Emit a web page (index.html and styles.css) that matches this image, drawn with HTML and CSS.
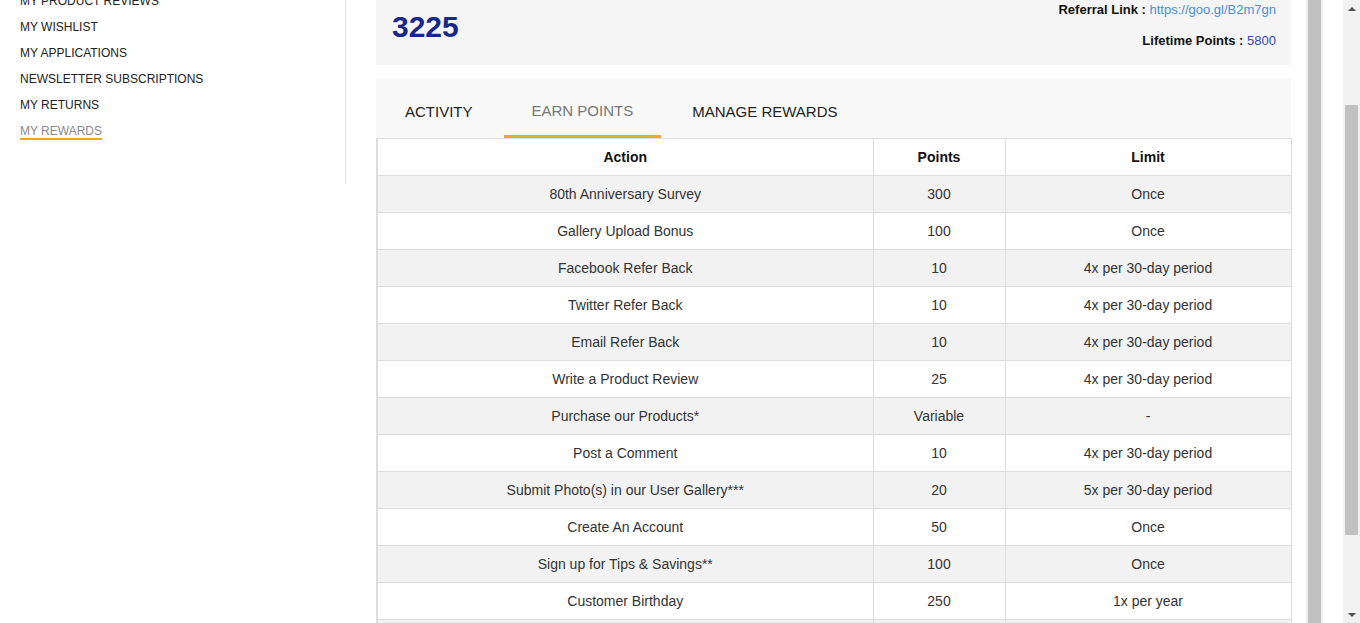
FILE: index.html
```html
<!DOCTYPE html>
<html lang="en">
<head>
<meta charset="utf-8">
<title>My Rewards</title>
<link rel="stylesheet" href="styles.css">
</head>
<body>
<div class="viewport">
  <div class="page">
    <aside class="sidebar">
      <ul class="side-menu">
        <li><a href="#">MY PRODUCT REVIEWS</a></li>
        <li><a href="#">MY WISHLIST</a></li>
        <li><a href="#">MY APPLICATIONS</a></li>
        <li><a href="#">NEWSLETTER SUBSCRIPTIONS</a></li>
        <li><a href="#">MY RETURNS</a></li>
        <li><a href="#" class="current">MY REWARDS</a></li>
      </ul>
    </aside>
    <main class="main">
      <section class="summary">
        <div class="balance">3225</div>
        <div class="meta">
          <p class="meta-line"><b>Referral Link :</b> <a href="#" class="ref-link">https://goo.gl/B2m7gn</a></p>
          <p class="meta-line meta-second"><b>Lifetime Points :</b> <span class="lifetime">5800</span></p>
        </div>
      </section>
      <section class="rewards">
        <nav class="tabs">
          <a href="#" class="tab">ACTIVITY</a>
          <a href="#" class="tab active">EARN POINTS</a>
          <a href="#" class="tab">MANAGE REWARDS</a>
        </nav>
        <table class="earn-table">
          <colgroup>
            <col class="c-action">
            <col class="c-points">
            <col class="c-limit">
          </colgroup>
          <thead>
            <tr><th>Action</th><th>Points</th><th>Limit</th></tr>
          </thead>
          <tbody>
            <tr><td>80th Anniversary Survey</td><td>300</td><td>Once</td></tr>
            <tr><td>Gallery Upload Bonus</td><td>100</td><td>Once</td></tr>
            <tr><td>Facebook Refer Back</td><td>10</td><td>4x per 30-day period</td></tr>
            <tr><td>Twitter Refer Back</td><td>10</td><td>4x per 30-day period</td></tr>
            <tr><td>Email Refer Back</td><td>10</td><td>4x per 30-day period</td></tr>
            <tr><td>Write a Product Review</td><td>25</td><td>4x per 30-day period</td></tr>
            <tr><td>Purchase our Products*</td><td>Variable</td><td>-</td></tr>
            <tr><td>Post a Comment</td><td>10</td><td>4x per 30-day period</td></tr>
            <tr><td>Submit Photo(s) in our User Gallery***</td><td>20</td><td>5x per 30-day period</td></tr>
            <tr><td>Create An Account</td><td>50</td><td>Once</td></tr>
            <tr><td>Sign up for Tips &amp; Savings**</td><td>100</td><td>Once</td></tr>
            <tr><td>Customer Birthday</td><td>250</td><td>1x per year</td></tr>
            <tr class="next-row"><td></td><td></td><td></td></tr>
          </tbody>
        </table>
      </section>
    </main>
  </div>
</div>
<div class="frame-bar"></div>
<div class="scrollbar">
  <div class="sb-btn"><span class="arrow-up"></span></div>
  <div class="sb-track"><div class="sb-thumb"></div></div>
  <div class="sb-btn"><span class="arrow-down"></span></div>
</div>
</body>
</html>
```

FILE: styles.css
```css
* { box-sizing: border-box; }

html, body {
  margin: 0;
  padding: 0;
  height: 623px;
  overflow: hidden;
  background: #ffffff;
}

body {
  display: flex;
  font-family: "Liberation Sans", Arial, sans-serif;
  color: #222;
}

.viewport {
  width: 1306px;
  height: 623px;
  overflow: hidden;
  flex: none;
}

.page {
  display: flex;
  align-items: flex-start;
}

/* Sidebar */
.sidebar {
  width: 346px;
  flex: none;
  border-right: 1px solid #e6e6e6;
  margin-top: -12px;
  padding: 0 0 40px 20px;
}

.side-menu {
  list-style: none;
  margin: 0;
  padding: 0;
}

.side-menu li {
  height: 26px;
  line-height: 26px;
  font-size: 12px;
}

.side-menu a {
  color: #222;
  text-decoration: none;
}

.side-menu a.current {
  color: #8a8a8a;
  display: inline-block;
  line-height: 14px;
  padding-top: 3px;
  border-bottom: 2px solid #e5a823;
}

/* Main */
.main {
  width: 915px;
  margin-left: 30px;
  flex: none;
}

.summary {
  height: 95px;
  margin-top: -30px;
  background: #f5f5f5;
  display: flex;
  justify-content: space-between;
  padding: 0 15px 0 16px;
}

.balance {
  padding-top: 39px;
  font-size: 30px;
  line-height: 36px;
  font-weight: bold;
  color: #17288a;
}

.meta {
  padding-top: 30px;
  text-align: right;
}

.meta-line {
  margin: 0;
  font-size: 13px;
  line-height: 20px;
  color: #111;
}

.meta-second {
  margin-top: 11px;
}

.ref-link {
  color: #4a8fd8;
  text-decoration: none;
}

.lifetime {
  color: #3345b0;
}

.rewards {
  margin-top: 14px;
}

.tabs {
  display: flex;
  gap: 3px;
  background: #f9f9f9;
  padding-left: 1px;
}

.tab {
  display: block;
  padding: 25px 28px 16px;
  font-size: 15px;
  line-height: 15px;
  color: #222;
  text-decoration: none;
  border-bottom: 3px solid transparent;
}

.tab.active {
  color: #777;
  border-bottom-color: #e8ad22;
  padding-top: 24px;
  padding-bottom: 17px;
}

/* Table */
.earn-table {
  width: 914px;
  border-collapse: collapse;
  border: 1px solid #dddddd;
  border-left-width: 2px;
  table-layout: fixed;
  font-size: 14px;
}

.c-action { width: 496px; }
.c-points { width: 132px; }
.c-limit { width: 286px; }

.earn-table th,
.earn-table td {
  border: 1px solid #dddddd;
  padding: 10px 8px;
  line-height: 16px;
  height: 37px;
  text-align: center;
}

.earn-table th {
  font-weight: bold;
  color: #111;
  background: #ffffff;
}

.earn-table td {
  color: #333;
}

.earn-table tbody tr:nth-child(odd) td {
  background: #f2f2f2;
}

.earn-table tbody tr:nth-child(even) td {
  background: #ffffff;
}

/* Inner frame scrollbar strip */
.frame-bar {
  width: 17px;
  height: 623px;
  flex: none;
  background: #c1c1c1;
  border-left: 2px solid #efefef;
  border-right: 2px solid #efefef;
  margin-right: 20px;
}

/* Window scrollbar */
.scrollbar {
  width: 17px;
  height: 623px;
  flex: none;
  background: #f1f1f1;
  display: flex;
  flex-direction: column;
}

.sb-btn {
  height: 17px;
  display: flex;
  align-items: center;
  justify-content: center;
}

.arrow-up {
  width: 0;
  height: 0;
  border-left: 4px solid transparent;
  border-right: 4px solid transparent;
  border-bottom: 4px solid #505050;
}

.arrow-down {
  width: 0;
  height: 0;
  border-left: 4px solid transparent;
  border-right: 4px solid transparent;
  border-top: 4px solid #505050;
}

.sb-track {
  flex: 1;
  padding: 88px 2px 0;
}

.sb-thumb {
  height: 430px;
  background: #c1c1c1;
}
```
